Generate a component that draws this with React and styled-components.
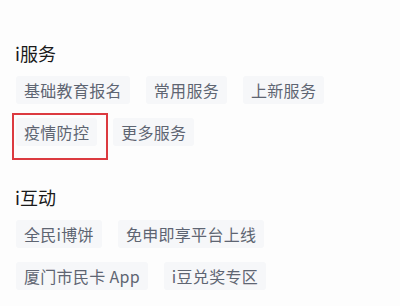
import React from "react";
import styled, { createGlobalStyle } from "styled-components";

const Global = createGlobalStyle`
  html, body { margin: 0; padding: 0; background: #fdfdfd; }
  body { font-family: "Noto Sans CJK SC", "Noto Sans", sans-serif; }
`;

const Page = styled.div`
  width: 400px;
  height: 306px;
  box-sizing: border-box;
  padding: 40px 15px 0 15px;
  display: flex;
  flex-direction: column;
  gap: 38px;
  overflow: hidden;
`;

const Section = styled.section`
  display: flex;
  flex-direction: column;
  gap: 10px;
`;

const Title = styled.h2`
  margin: 0;
  height: 26px;
  line-height: 26px;
  font-size: 18px;
  font-weight: 400;
  color: #1a1a1a;
`;

const Chips = styled.div`
  display: flex;
  flex-direction: column;
  gap: 14px;
`;

const Row = styled.div`
  display: flex;
  gap: 16px;
  padding-left: 1px;
`;

const Chip = styled.span`
  display: inline-flex;
  align-items: center;
  height: 28px;
  padding: 0 8px;
  background: #f6f7f9;
  border-radius: 3px;
  font-size: 16px;
  letter-spacing: 0.3px;
  color: #5e6572;
  white-space: nowrap;
`;

const Marked = styled.div`
  position: relative;
  display: inline-flex;
`;

const RedBox = styled.div`
  position: absolute;
  left: -4px;
  top: -5px;
  width: 96px;
  height: 47px;
  box-sizing: border-box;
  border: 2px solid #dc3a40;
  pointer-events: none;
`;

const sections = [
  {
    title: "i服务",
    rows: [
      ["基础教育报名", "常用服务", "上新服务"],
      [{ text: "疫情防控", marked: true }, "更多服务"],
    ],
  },
  {
    title: "i互动",
    rows: [
      ["全民i博饼", "免申即享平台上线"],
      ["厦门市民卡 App", "i豆兑奖专区"],
    ],
  },
];

export default function App() {
  return (
    <>
      <Global />
      <Page>
        {sections.map((s) => (
          <Section key={s.title}>
            <Title>{s.title}</Title>
            <Chips>
              {s.rows.map((r, i) => (
                <Row key={i}>
                  {r.map((c) =>
                    typeof c === "string" ? (
                      <Chip key={c}>{c}</Chip>
                    ) : (
                      <Marked key={c.text}>
                        <Chip>{c.text}</Chip>
                        <RedBox />
                      </Marked>
                    )
                  )}
                </Row>
              ))}
            </Chips>
          </Section>
        ))}
      </Page>
    </>
  );
}
